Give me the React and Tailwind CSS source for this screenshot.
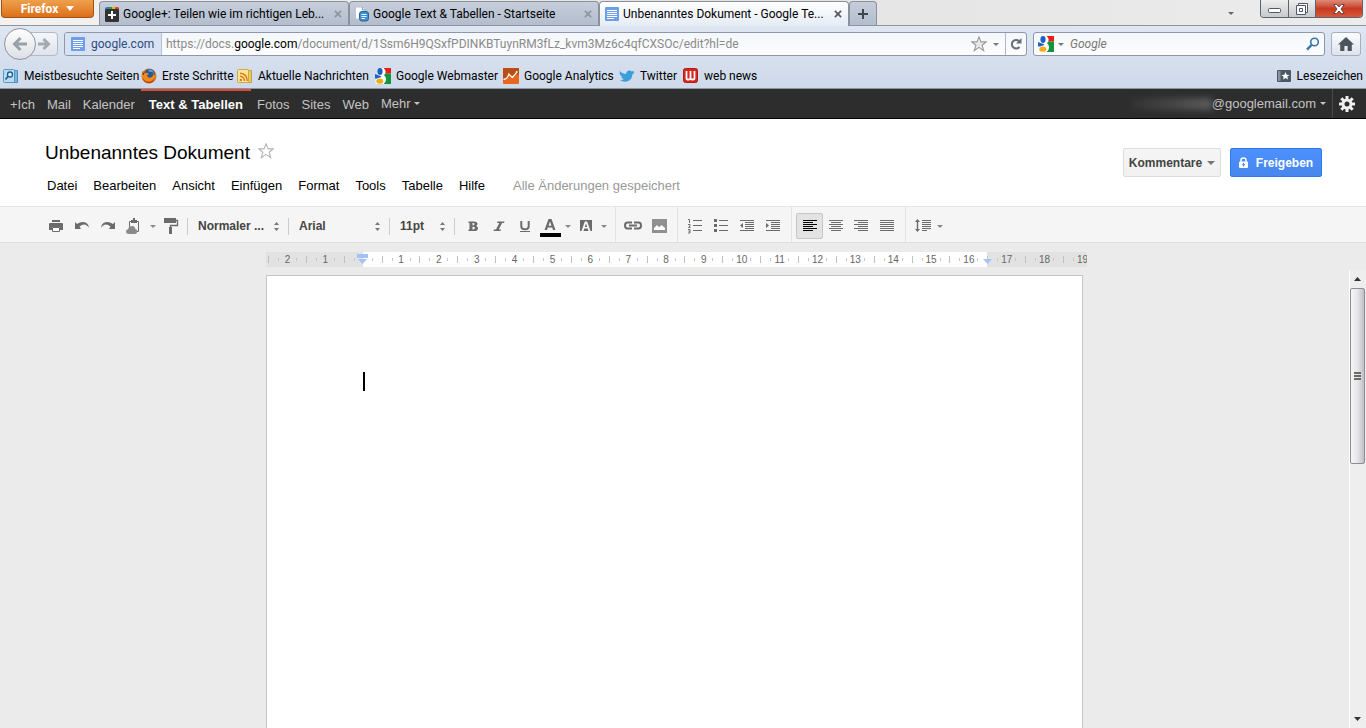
import React from "react";

// --- Data ---
const TABS = [
  { title: "Google+: Teilen wie im richtigen Leb...", icon: "plus" },
  { title: "Google Text & Tabellen - Startseite", icon: "docsHome" },
  { title: "Unbenanntes Dokument - Google Te...", icon: "doc", active: true },
];

const BOOKMARKS = [
  { label: "Meistbesuchte Seiten", icon: "folderSearch", width: "w-[138px]" },
  { label: "Erste Schritte", icon: "firefox", width: "w-[96px]" },
  { label: "Aktuelle Nachrichten", icon: "feed", width: "w-[138px]" },
  { label: "Google Webmaster", icon: "google", width: "w-[128px]" },
  { label: "Google Analytics", icon: "analytics", width: "w-[116px]" },
  { label: "Twitter", icon: "twitter", width: "w-[64px]" },
  { label: "web news", icon: "webnews", width: "w-[80px]" },
];

const GOOGLE_LINKS = ["+Ich", "Mail", "Kalender", "Text & Tabellen", "Fotos", "Sites", "Web"];
const MENU = ["Datei", "Bearbeiten", "Ansicht", "Einfügen", "Format", "Tools", "Tabelle", "Hilfe"];

// one cell per centimetre, 0 is the left margin of the page
const RULER = Array.from({ length: 22 }, (_, i) => i - 2);

// --- Icons ---
const ICONS = {
  plus: (
    <>
      <rect x="1" y="2" width="14" height="14" rx="1.5" fill="#333" />
      <path d="M1 3q0-2 2-2h2v2z" fill="#3b6fe0" />
      <path d="M4.500 1h3.500v2h-3.500z" fill="#2a9a3d" />
      <path d="M8 1h3.500v2h-3.500z" fill="#e5b51b" />
      <path d="M11.500 1h2q1.500 0 1.500 2h-3.500z" fill="#d93b2b" />
      <path d="M7 5h2v3h3v2h-3v3h-2v-3h-3v-2h3z" fill="#fff" />
    </>
  ),
  docsHome: (
    <>
      <path d="M1.500 1h7l3 3v9h-10z" fill="#fff" stroke="#b9c3d2" />
      <path d="M8.500 1v3h3" fill="#dde5f0" stroke="#8d9db5" />
      <rect x="5.500" y="5.500" width="9" height="9.500" rx="2.500" fill="#3d91d0" stroke="#1e659e" />
      <path d="M7.500 8.500h5M7.500 10.500h5M7.500 12.500h3.500" stroke="#fff" />
    </>
  ),
  doc: (
    <>
      <rect x="1" y="1" width="14" height="14" rx="1" fill="#6d9eeb" />
      <path d="M3 4.500h10M3 6.500h10M3 8.500h10M3 10.500h10M3 12.500h7" stroke="#fff" />
    </>
  ),
  folderSearch: (
    <>
      <path d="M3 2.500h11.500v12H3z" fill="#79b6dc" stroke="#4b8cb8" />
      <rect x=".5" y="1.500" width="11" height="13" rx="1" fill="#b5dcf3" stroke="#5498c4" />
      <circle cx="7" cy="6.500" r="2.500" fill="#dcf0fb" stroke="#235e8c" strokeWidth="1.300" />
      <path d="M5.200 8.300L2.500 11.500" stroke="#235e8c" strokeWidth="1.700" />
    </>
  ),
  firefox: (
    <>
      <circle cx="8" cy="8" r="7.500" fill="#e0751a" />
      <circle cx="8.500" cy="6.500" r="5.500" fill="#285a96" />
      <path d="M8 1.500c3 0 4.500 2 4.800 4-1.500-2.500-3.800-1-5.300-2.500z" fill="#61a8dd" />
      <path d="M1 3q1.500.8 2.500 2 1.500-.6 3 0 1 .3 1.500 1-1.500.5-2 1.800 1 2.400 3.500 1.800 2.800-.6 3.200-4.600.8 1 .8 2.500l1-1.500q0 7-6.500 8.500Q.5 14 .8 7z" fill="#ee8b1f" />
      <path d="M1.300 9q2 5.200 7 4.800 3.800-.5 5.200-4.300-.5 5.500-5.500 5.800-5.700-.3-6.700-6.300z" fill="#b7410e" />
      <path d="M1.500 4l2 1.500-1.600 2z" fill="#7c2d12" />
    </>
  ),
  feed: (
    <>
      <path d="M3 2.500h11.500v12H3z" fill="#e9c65f" stroke="#c8a03c" />
      <rect x=".5" y="1.500" width="11" height="13" rx="1" fill="#f8e49b" stroke="#d0a93f" />
      <circle cx="3.800" cy="12" r="1.200" fill="#dd7b16" />
      <path d="M3 8.300q4 .2 4.500 4.700M3 5.300q7 .4 7.300 7.700" stroke="#dd7b16" strokeWidth="1.500" fill="none" />
    </>
  ),
  google: (
    <>
      <path d="M8 0h8v5.500H9z" fill="#ee1c12" />
      <path d="M9.500 5.500H16V16H8.500q3.500-3.500 0-6.500z" fill="#12933c" />
      <path d="M8.500 0q4 3.500.5 7 4.500 4.500-.5 9H1q-2-5 3-7Q0 3 4 0z" fill="#fff" />
      <ellipse cx="5" cy="3.500" rx="2.600" ry="3.400" fill="#1c5fc4" />
      <ellipse cx="4.800" cy="13.200" rx="3.500" ry="2.600" fill="#f4ac18" />
      <path d="M0 6l4 1.500q2 0 2.500 1.500L2 10.500H0z" fill="#1f62c4" />
    </>
  ),
  analytics: (
    <>
      <rect width="16" height="16" rx="1" fill="#e7671c" />
      <path d="M0 0h16v6L9 8 6 6 0 13z" fill="#b94e14" />
      <path d="M1 11.500l2.500-1 2.500-4 3.500 3 4.500-5.500" stroke="#fff" strokeWidth="1.200" fill="none" />
      <path d="M.5 10.500h1.500v1.500H.5zM5 5.500h1.500v1.500H5zM8.500 8.500h1.500v1.500H8.500zM13 3h1.500v1.500H13z" fill="#fff" />
    </>
  ),
  twitter: (
    <path
      d="M.5 3q3 3.200 6.500 3 .2-3 3-3.500 1.700-.2 2.800 1l2.400-.7-1 1.500 1.500.2-2.200 1.700Q13 12 8 13.500q-4 .8-7-1.500 2.500.2 4-1-2.300-.4-2.800-2h1.300Q1 7.500.8 5.500z"
      fill="#3a9fd8"
    />
  ),
  webnews: (
    <>
      <rect x=".5" y=".5" width="14" height="14" rx="2" fill="#d8261c" stroke="#b11c14" />
      <path d="M3.500 3v7.500q0 1 1 1h1.500q1.500 0 1.500-1.500V3M7.500 10q0 1.500 1.500 1.500h1q1.500 0 1.500-1V3" stroke="#fff" strokeWidth="1.800" fill="none" />
    </>
  ),
  bookmarks: (
    <>
      <rect x="1" y="2" width="14" height="12" rx="1" fill="#4d5867" />
      <path d="M2 3h2.500v10H2z" fill="#8592a3" />
      <path d="M9.500 4l1.100 2.700 2.900.2-2.200 1.900.7 2.800-2.500-1.500L7 11.600l.7-2.800-2.200-1.900 2.900-.2z" fill="#fff" />
    </>
  ),
};

function Icon({ name }) {
  return (
    <svg viewBox="0 0 16 16" className="h-4 w-4 shrink-0" aria-hidden="true">
      {ICONS[name]}
    </svg>
  );
}

function Caret({ className = "fill-[#777]" }) {
  return (
    <svg viewBox="0 0 6 3" className={`h-[3px] w-1.5 shrink-0 ${className}`} aria-hidden="true">
      <path d="M0 0h6L3 3z" />
    </svg>
  );
}

function Star({ className }) {
  return (
    <svg viewBox="0 0 16 16" className={className} strokeWidth="1.100" aria-hidden="true">
      <path d="M8 .9l2 5h5.200l-4.100 3.300 1.600 5.400L8 11.400l-4.700 3.200 1.600-5.400L.8 5.900H6z" />
    </svg>
  );
}

// --- Browser window ---
function TabStrip() {
  return (
    <div className="flex h-[26px] items-start border-b border-[#8f959e] bg-linear-to-r from-[#f3f2f1] via-[#e3e3e3] to-[#ececec]">
      <button className="ml-px flex h-[18px] w-[93px] shrink-0 items-center justify-center gap-2 rounded-b border border-t-0 border-[#a8500f] bg-linear-to-b from-[#eea04c] to-[#dc6f16] text-[12px] font-bold text-white">
        Firefox
        <svg viewBox="0 0 8 5" className="h-[5px] w-2 fill-white" aria-hidden="true">
          <path d="M0 0h8L4 5z" />
        </svg>
      </button>
      <div className="ml-[5px] flex h-full min-w-0 pt-px" role="tablist">
        {TABS.map((tab) => (
          <div
            key={tab.title}
            role="tab"
            aria-selected={!!tab.active}
            className={`flex w-[250px] min-w-0 items-center rounded-t-sm border border-b-0 border-[#8b919b] pt-px pr-1.5 pl-1 ${
              tab.active
                ? "-mb-px bg-linear-to-b from-white to-[#e5ecf6] pb-px"
                : "bg-linear-to-b from-[#c6cedb] to-[#b3bdcd]"
            }`}
          >
            <Icon name={tab.icon} />
            <span className="ml-[3px] min-w-0 flex-1 overflow-hidden whitespace-nowrap">{tab.title}</span>
            <button aria-label="Tab schließen" className="shrink-0">
              <svg viewBox="0 0 9 9" className={`h-2 w-2 ${tab.active ? "stroke-[#555]" : "stroke-[#8d949f]"}`} aria-hidden="true">
                <path d="M1 1l7 7M8 1L1 8" strokeWidth="1.800" />
              </svg>
            </button>
          </div>
        ))}
        <button aria-label="Neuer Tab" className="flex w-7 items-center justify-center rounded-t-sm border border-b-0 border-[#8b919b] bg-linear-to-b from-[#c6cedb] to-[#b3bdcd]">
          <svg viewBox="0 0 10 10" className="h-2.5 w-2.5 stroke-[#3f4650]" aria-hidden="true">
            <path d="M5 0v10M0 5h10" strokeWidth="2" />
          </svg>
        </button>
      </div>
      <button aria-label="Alle Tabs auflisten" className="mt-3 mr-[26px] ml-auto block">
        <Caret className="fill-[#666]" />
      </button>
      <div className="mr-[3px] flex h-[18px] shrink-0 overflow-hidden rounded-b border border-t-0 border-[#5e646e]">
        <button aria-label="Minimieren" className="flex w-7 items-center justify-center border-r border-[#5e646e] bg-linear-to-b from-[#eeeeee] to-[#c7c9cc]">
          <svg viewBox="0 0 13 6" className="mt-1 h-1.5 w-[13px]" aria-hidden="true">
            <rect x=".5" y=".5" width="12" height="4" rx="1" fill="#fff" stroke="#50566a" />
          </svg>
        </button>
        <button aria-label="Verkleinern" className="flex w-[27px] items-center justify-center border-r border-[#5e646e] bg-linear-to-b from-[#eeeeee] to-[#c7c9cc]">
          <svg viewBox="0 0 12 12" className="h-3 w-3" fill="#fff" stroke="#50566a" aria-hidden="true">
            <path d="M2.500.5h9v9h-9z" />
            <path d="M.5 2.500h9v9h-9z" />
            <path d="M3.500 5.500h3v3h-3z" />
          </svg>
        </button>
        <button aria-label="Schließen" className="flex w-[46px] items-center justify-center bg-linear-to-b from-[#dd8a78] via-[#c73a20] to-[#d8573a]">
          <svg viewBox="0 0 12 10" className="h-2.5 w-3" aria-hidden="true">
            <path d="M.7.5h3L6 3 8.300.500h3L8 5l3.300 4.500h-3L6 7 3.700 9.500h-3L4 5z" fill="#fff" stroke="#5b3a45" strokeWidth=".9" />
          </svg>
        </button>
      </div>
    </div>
  );
}

function NavigationBar() {
  return (
    <div className="flex h-9 items-center pr-[5px] pl-1">
      <button aria-label="Zurück" className="z-10 flex h-8 w-8 shrink-0 items-center justify-center rounded-full border border-[#8f959e] bg-linear-to-b from-white to-[#dcdfe5]">
        <svg viewBox="0 0 16 16" className="h-4 w-4 fill-none stroke-[#9aa0a8]" aria-hidden="true">
          <path d="M15 8H3M8.500 2L2.500 8l6 6" strokeWidth="3" />
        </svg>
      </button>
      <button aria-label="Vor" className="-ml-2 flex h-6 w-[30px] shrink-0 items-center justify-end rounded-r border border-[#b3bac5] bg-linear-to-b from-[#f4f6f9] to-[#dfe4ec] pr-1.5">
        <svg viewBox="0 0 14 14" className="h-3.5 w-3.5 fill-none stroke-[#a3a9b1]" aria-hidden="true">
          <path d="M1 7h10M6.500 2l5 5-5 5" strokeWidth="3" />
        </svg>
      </button>
      <div className="ml-1.5 flex h-6 min-w-0 flex-1 items-center overflow-hidden rounded-[3px] border border-[#8f98a8] bg-linear-to-b from-[#f4f7fb] to-[#fdfdfe]">
        <button className="flex h-full w-[97px] shrink-0 items-center gap-[5px] border-r border-[#b5c0d3] bg-[#d8e2f3] pl-[5px] text-[#2f4b80]">
          <Icon name="doc" />
          google.com
        </button>
        <div role="textbox" aria-label="Adresse" className="min-w-0 flex-1 overflow-hidden pl-1 whitespace-nowrap text-[#8a8a8a]">
          https://docs.<span className="text-black">google.com</span>/document/d/1Ssm6H9QSxfPDINKBTuynRM3fLz_kvm3Mz6c4qfCXSOc/edit?hl=de
        </div>
        <button aria-label="Lesezeichen hinzufügen" className="shrink-0">
          <Star className="h-4 w-4 fill-[#e9e9e9] stroke-[#9a9a9a]" />
        </button>
        <button aria-label="Adressen anzeigen" className="flex h-full w-[18px] items-center justify-center">
          <Caret />
        </button>
        <button aria-label="Neu laden" className="flex h-full w-[21px] items-center justify-center border-l border-[#b0b7c3]">
          <svg viewBox="0 0 12 12" className="h-3 w-3" aria-hidden="true">
            <path d="M9.500 9A4.300 4.300 0 1 1 9 3" fill="none" stroke="#666d76" strokeWidth="2" />
            <path d="M11.500 0v5.500H6z" fill="#666d76" />
          </svg>
        </button>
      </div>
      <div className="ml-1.5 flex h-6 w-[292px] shrink-0 items-center rounded-[3px] border border-[#8f98a8] bg-linear-to-b from-[#f4f7fb] to-[#fdfdfe] pr-1 pl-1">
        <button aria-label="Suchmaschine wählen" className="flex shrink-0 items-center gap-1">
          <Icon name="google" />
          <Caret />
        </button>
        <input aria-label="Suche" placeholder="Google" className="ml-1.5 min-w-0 flex-1 bg-transparent italic outline-none placeholder:text-[#777]" />
        <button aria-label="Suchen">
          <svg viewBox="0 0 14 14" className="h-3.5 w-3.5 fill-none stroke-[#3a73ab]" aria-hidden="true">
            <circle cx="8.500" cy="5" r="3.800" strokeWidth="1.600" />
            <path d="M5.500 8L1 12.700" strokeWidth="2.400" />
          </svg>
        </button>
      </div>
      <button aria-label="Startseite" className="ml-1.5 flex h-6 w-[30px] shrink-0 items-center justify-center rounded-[3px] border border-[#a7afbc] bg-linear-to-b from-[#fbfcfd] to-[#dfe4ec]">
        <svg viewBox="0 0 16 14" className="h-3.5 w-4 fill-[#4c545e]" aria-hidden="true">
          <path d="M8 0l8 7.500h-2.200V14H9.600V9H6.400v5H2.200V7.500H0z" />
        </svg>
      </button>
    </div>
  );
}

function BookmarksBar() {
  return (
    <div className="flex h-[26px] items-center px-[3px] pt-px text-black">
      {BOOKMARKS.map((b) => (
        <a key={b.label} href="#" className={`flex shrink-0 items-center gap-[5px] whitespace-nowrap ${b.width}`}>
          <Icon name={b.icon} />
          {b.label}
        </a>
      ))}
      <button className="ml-auto flex items-center gap-[5px]">
        <Icon name="bookmarks" />
        Lesezeichen
      </button>
    </div>
  );
}

// --- Google bar ---
function GoogleBar() {
  return (
    <nav className="flex h-[30px] shrink-0 items-stretch border-b border-black bg-[#2d2d2d] pl-1 text-[13px] leading-8 text-[#c4c4c4]">
      {GOOGLE_LINKS.map((label) => (
        <a
          key={label}
          href="#"
          className={`whitespace-nowrap ${
            label === "Text & Tabellen" ? "border-t-2 border-[#dd4b39] px-2 leading-7 font-bold text-white" : "px-1.5"
          }`}
        >
          {label}
        </a>
      ))}
      <button className="flex items-center gap-[3px] px-1.5">
        Mehr
        <Caret className="fill-[#c4c4c4]" />
      </button>
      <button className="ml-auto flex items-center">
        <span className="h-3 w-20 bg-linear-to-r from-[#333] to-[#5c5c5c] blur-[3px]" />
        @googlemail.com
        <Caret className="ml-1 fill-[#c4c4c4]" />
      </button>
      <button aria-label="Einstellungen" className="ml-1.5 flex w-[34px] items-center border-l border-[#4a4a4a] pl-[5px]">
        <svg viewBox="0 0 18 18" className="h-[18px] w-[18px]" aria-hidden="true">
          <path d="M9 1v16M1 9h16M3.300 3.300l11.400 11.400M14.700 3.300L3.300 14.700" stroke="#eee" strokeWidth="3" />
          <circle cx="9" cy="9" r="5.500" fill="#eee" />
          <circle cx="9" cy="9" r="2.500" fill="#2d2d2d" />
        </svg>
      </button>
    </nav>
  );
}

// --- Document header ---
function DocHeader() {
  return (
    <header className="flex h-[87px] shrink-0 justify-between bg-white pr-11 pl-[39px]">
      <div className="pt-[21px]">
        <div className="flex items-center gap-2 pl-1.5">
          <h1 className="text-[19px] leading-[26px] text-black">Unbenanntes Dokument</h1>
          <button aria-label="Markieren">
            <Star className="-mt-1 h-4 w-4 fill-none stroke-[#b5b5b5]" />
          </button>
        </div>
        <div className="mt-[9px] flex text-[13px] leading-[22px] text-black">
          {MENU.map((item) => (
            <button key={item} className="px-2">
              {item}
            </button>
          ))}
          <span className="ml-5 text-[#999]">Alle Änderungen gespeichert</span>
        </div>
      </div>
      <div className="mt-[29px] flex h-[29px] gap-[9px] text-[12px] font-bold">
        <button className="flex w-[98px] items-center justify-center gap-[5px] rounded-xs border border-[#dcdcdc] bg-linear-to-b from-[#f5f5f5] to-[#f1f1f1] text-[#444]">
          Kommentare
          <svg viewBox="0 0 8 4" className="h-1 w-2 fill-[#777]" aria-hidden="true">
            <path d="M0 0h8L4 4z" />
          </svg>
        </button>
        <button className="flex w-[92px] items-center justify-center gap-2 rounded-xs border border-[#3079ed] bg-linear-to-b from-[#4d90fe] to-[#4787ed] text-white">
          <svg viewBox="0 0 9 11" className="h-[11px] w-[9px]" aria-hidden="true">
            <path d="M2 5V3q0-2 2.500-2T7 3v2" fill="none" stroke="#fff" strokeWidth="1.500" />
            <rect y="4.500" width="9" height="6.500" rx="1" fill="#fff" />
            <path d="M4.500 6v3.500M3 7.700h3" stroke="#4787ed" />
          </svg>
          Freigeben
        </button>
      </div>
    </header>
  );
}

// --- Toolbar ---
function Tool({ label, active, width = "w-[26px]", children }) {
  return (
    <button
      aria-label={label}
      title={label}
      className={`flex h-[26px] shrink-0 items-center justify-center ${width} ${
        active ? "rounded-xs border border-[#c6c6c6] bg-[#e3e3e3] text-black" : "text-[#6b6b6b]"
      }`}
    >
      <svg viewBox="0 0 16 16" className="h-4 w-4 overflow-visible" fill="currentColor" aria-hidden="true">
        {children}
      </svg>
    </button>
  );
}

function ToolCaret({ label, width = "w-3" }) {
  return (
    <button aria-label={label} className={`flex h-[26px] shrink-0 items-center justify-center ${width}`}>
      <Caret className="fill-[#888]" />
    </button>
  );
}

function ToolSelect({ label, value, width }) {
  return (
    <div className={`flex shrink-0 items-center pr-1.5 pl-[7px] ${width}`}>
      <select aria-label={label} defaultValue={value} className="min-w-0 flex-1 appearance-none bg-transparent text-[12px] font-bold text-[#444] outline-none">
        <option>{value}</option>
      </select>
      <svg viewBox="0 0 5 9" className="pointer-events-none h-[9px] w-[5px] fill-[#777]" aria-hidden="true">
        <path d="M0 3h5L2.500 0zM0 6h5L2.500 9z" />
      </svg>
    </div>
  );
}

const Separator = () => <span className="mx-[3px] h-[17px] w-px shrink-0 bg-[#ccc]" />;
const GroupSeparator = () => <span className="-mt-[3px] mr-1 ml-[5px] w-px shrink-0 self-stretch bg-[#e2e2e2]" />;

function Toolbar() {
  return (
    <div className="flex h-[37px] shrink-0 items-center border-t border-b border-t-[#e5e5e5] border-b-[#dedede] bg-[#f5f5f5] pt-[3px] pl-[43px]" role="toolbar">
      <Tool label="Drucken">
        <path d="M4 2h8v2H4zM2 5h12q1 0 1 1v6h-3V9H4v3H1V6q0-1 1-1z" />
        <path d="M4.500 9.500h7v4h-7z" fill="#fff" stroke="currentColor" />
      </Tool>
      <Tool label="Rückgängig">
        <path d="M1 4l2 2q5-3.500 9.500-1 2.500 1.800 2.500 5-2-3.500-5-3.500-2 0-4.500 2L7 11H1z" />
      </Tool>
      <Tool label="Wiederholen">
        <path d="M15 4l-2 2Q8 2.500 3.500 5 1 6.800 1 10q2-3.500 5-3.500 2 0 4.500 2L9 11h6z" />
      </Tool>
      <Tool label="Web-Zwischenablage">
        <path d="M3.500 10V3.500h9v10H10" fill="none" stroke="currentColor" />
        <path d="M5 2h2V0h2v2h2v3H5z" />
        <path d="M3 16q-3 0-3-2.500 0-2 2-2.200Q3.300 8 6.300 8q2.500 0 3 3 2 .3 2 2.500T9 16z" fill="#8a8a8a" />
      </Tool>
      <ToolCaret label="Zwischenablage öffnen" width="w-[11px]" />
      <Tool label="Format übertragen">
        <path d="M1 0h12v5H1z" />
        <path d="M12 2.500h2.500v5h-7V10" fill="none" stroke="currentColor" strokeWidth="1.300" />
        <path d="M6 9h3v7H6z" />
      </Tool>
      <Separator />
      <ToolSelect label="Formatvorlage" value="Normaler ..." width="w-[94px]" />
      <Separator />
      <ToolSelect label="Schriftart" value="Arial" width="w-[94px]" />
      <Separator />
      <ToolSelect label="Schriftgröße" value="11pt" width="w-[58px]" />
      <Separator />
      <Tool label="Fett" width="ml-0.5 w-[26px]">
        <path fillRule="evenodd" d="M3.500 3.500H9q3.500 0 3.500 2.500 0 1.300-1.300 1.900Q13 8.500 13 10.200q0 2.800-3.500 2.800h-6v-1.500h1V5h-1zM7.500 5v2.300h.8q1.200 0 1.200-1.200T8.300 5zm0 3.800v2.700h1q1.300 0 1.300-1.400T8.500 8.800z" />
      </Tool>
      <Tool label="Kursiv">
        <path d="M6.500 3.500h7L13 5h-2L7.800 11.500h2.200L9.500 13h-7l.5-1.500h2L8.300 5H6z" />
      </Tool>
      <Tool label="Unterstrichen">
        <path d="M4.300 3v5q0 3.300 3.700 3.300T11.700 8V3" fill="none" stroke="currentColor" strokeWidth="2" />
        <path d="M3 13h10v1H3z" />
      </Tool>
      <button aria-label="Textfarbe" className="flex h-[26px] w-6 shrink-0 flex-col items-center justify-end pb-0.5">
        <svg viewBox="0 0 12 11" className="h-[11px] w-3 fill-[#6b6b6b]" aria-hidden="true">
          <path fillRule="evenodd" d="M4.500 0h3L11.500 11H9L8.200 8.500H3.800L3 11H.5zM6 2.500L4.500 6.700h3z" />
        </svg>
        <span className="mt-[3px] h-1 w-[21px] bg-black" />
      </button>
      <ToolCaret label="Textfarbe wählen" />
      <Tool label="Hervorhebungsfarbe" width="w-6">
        <path fillRule="evenodd" d="M2 2h12v11H2zM6.800 3.500L3.500 13h2l.8-2.500h3.400l.8 2.500h2L9.200 3.500zM8 5.500L9.200 9H6.800z" />
      </Tool>
      <ToolCaret label="Hervorhebungsfarbe wählen" />
      <GroupSeparator />
      <Tool label="Link einfügen">
        <path d="M7 10.500H2.500Q0 10.500 0 7.500t2.500-3H7M9 4.500h4.500q2.500 0 2.500 3t-2.500 3H9M4 7.500h8" fill="none" stroke="currentColor" strokeWidth="2" />
      </Tool>
      <Tool label="Bild einfügen">
        <path d="M1 1h15v14H1z" fill="#909090" />
        <path d="M3 12V10l3-3 2 2.300L10.500 7l3.500 3v2z" fill="#fff" />
      </Tool>
      <GroupSeparator />
      <Tool label="Nummerierte Liste">
        <path d="M6 2h9v1H6zM6 7h9v1H6zM6 12h9v1H6z" />
        <path d="M1 1.500h1.500V5M1 6.500h2V8L1.500 9.500H3.500M1 11.500h2v3.500H1M1.500 13.200H3" fill="none" stroke="currentColor" />
      </Tool>
      <Tool label="Aufzählung">
        <path d="M6 2h9v1H6zM6 7h9v1H6zM6 12h9v1H6zM1 1h3v3H1zM1 6h3v3H1zM1 11h3v3H1z" />
      </Tool>
      <Tool label="Einzug verkleinern">
        <path d="M1 2h14v1H1zM6 4h9v1H6zM6 6h9v1H6zM6 8h9v1H6zM6 10h9v1H6zM1 12h14v1H1zM4 5v5L1 7.500z" />
      </Tool>
      <Tool label="Einzug vergrößern">
        <path d="M1 2h14v1H1zM6 4h9v1H6zM6 6h9v1H6zM6 8h9v1H6zM6 10h9v1H6zM1 12h14v1H1zM1 5v5l3-2.500z" />
      </Tool>
      <GroupSeparator />
      <Tool label="Linksbündig" active width="w-[27px]">
        <path d="M1 2h14v1H1zM1 4h10v1H1zM1 6h14v1H1zM1 8h10v1H1zM1 10h14v1H1zM1 12h10v1H1z" />
      </Tool>
      <Tool label="Zentriert" width="w-[25px]">
        <path d="M1 2h14v1H1zM3 4h10v1H3zM1 6h14v1H1zM3 8h10v1H3zM1 10h14v1H1zM3 12h10v1H3z" />
      </Tool>
      <Tool label="Rechtsbündig">
        <path d="M1 2h14v1H1zM5 4h10v1H5zM1 6h14v1H1zM5 8h10v1H5zM1 10h14v1H1zM5 12h10v1H5z" />
      </Tool>
      <Tool label="Blocksatz">
        <path d="M1 2h14v1H1zM1 4h14v1H1zM1 6h14v1H1zM1 8h14v1H1zM1 10h14v1H1zM1 12h14v1H1z" />
      </Tool>
      <GroupSeparator />
      <Tool label="Zeilenabstand">
        <path d="M7 2h9v1H7zM7 4h9v1H7zM7 6h9v1H7zM7 8h9v1H7zM7 10h9v1H7zM7 12h5v1H7zM2.500 1L5 4H3.200v7H5l-2.500 3L0 11h1.800V4H0z" />
      </Tool>
      <ToolCaret label="Zeilenabstand wählen" width="w-2" />
    </div>
  );
}

// --- Editor ---
function RulerCell({ cm }) {
  let background = "bg-white";
  if (cm < 0 || cm > 16) background = "bg-[#e2e2e2]";
  if (cm === 0) background = "bg-linear-to-r from-[#e2e2e2] from-50% to-white to-50%";

  return (
    <div className={`relative flex min-w-0 flex-1 items-center ${background}`}>
      <span className="h-[7px] w-px bg-[#c0c0c0]" />
      <span className="flex-1" />
      <span className="h-[3px] w-px bg-[#c8c8c8]" />
      <span className="w-[17px] text-center">{cm === 0 ? "" : Math.abs(cm)}</span>
      <span className="h-[3px] w-px bg-[#c8c8c8]" />
      <span className="flex-1" />
      {cm === 0 && (
        <svg viewBox="0 0 11 11" className="absolute top-0.5 left-[13px] h-[11px] w-[11px] fill-[#a4c2f4]" aria-hidden="true">
          <path d="M0 0h11v4H0zM1 5h9L5.500 10z" />
        </svg>
      )}
      {cm === 17 && (
        <svg viewBox="0 0 9 5" className="absolute top-[7px] -left-1 h-[5px] w-[9px] fill-[#a4c2f4]" aria-hidden="true">
          <path d="M0 0h9L4.500 5z" />
        </svg>
      )}
    </div>
  );
}

function Scrollbar() {
  return (
    <div className="mt-[27px] flex w-[17px] shrink-0 flex-col items-center border-l border-white bg-[#eeeeee] pr-px">
      <button aria-label="Nach oben" className="flex h-[18px] items-center">
        <svg viewBox="0 0 7 4" className="h-1 w-[7px] fill-[#333]" aria-hidden="true">
          <path d="M0 4h7L3.500 0z" />
        </svg>
      </button>
      <div className="flex h-44 w-full flex-col items-center justify-center gap-px rounded-xs border border-[#8e8e92] bg-linear-to-r from-[#f5f5f5] via-[#e6e6e8] to-[#bfc0c6]">
        <span className="h-0.5 w-[7px] bg-[#6a6a6a]" />
        <span className="h-0.5 w-[7px] bg-[#6a6a6a]" />
        <span className="h-0.5 w-[7px] bg-[#6a6a6a]" />
      </div>
      <button aria-label="Nach unten" className="mt-auto flex h-[18px] items-center">
        <svg viewBox="0 0 7 4" className="h-1 w-[7px] fill-[#333]" aria-hidden="true">
          <path d="M0 0h7L3.500 4z" />
        </svg>
      </button>
    </div>
  );
}

function Editor() {
  return (
    <main className="flex min-h-0 flex-1 overflow-hidden bg-[#ebebeb]">
      <div className="flex min-w-0 flex-1 flex-col items-center">
        <div className="flex min-h-0 w-[817px] flex-1 flex-col">
          <div className="mt-[9px] flex h-[15px] w-[821px] shrink-0 overflow-hidden bg-[#e2e2e2] pl-0.5 text-[10px] leading-[15px] text-[#666]">
            <div className="flex w-[833px] shrink-0">
              {RULER.map((cm) => (
                <RulerCell key={cm} cm={cm} />
              ))}
            </div>
          </div>
          <div role="textbox" aria-label="Dokument" aria-multiline="true" className="mt-2 flex-1 border border-b-0 border-[#c6c6c6] bg-white px-24 pt-24">
            <span className="block h-[19px] w-0.5 bg-black" />
          </div>
        </div>
      </div>
      <Scrollbar />
    </main>
  );
}

export default function App() {
  return (
    <div className="flex h-screen flex-col overflow-hidden font-['Liberation_Sans',Arial,sans-serif]">
      <div className="shrink-0 border-b border-[#8f959e] bg-linear-to-b from-[#e5ecf6] to-[#ced9ea] font-[Roboto,'Open_Sans',sans-serif] text-[12px] leading-4 text-black">
        <TabStrip />
        <NavigationBar />
        <BookmarksBar />
      </div>
      <GoogleBar />
      <DocHeader />
      <Toolbar />
      <Editor />
    </div>
  );
}
